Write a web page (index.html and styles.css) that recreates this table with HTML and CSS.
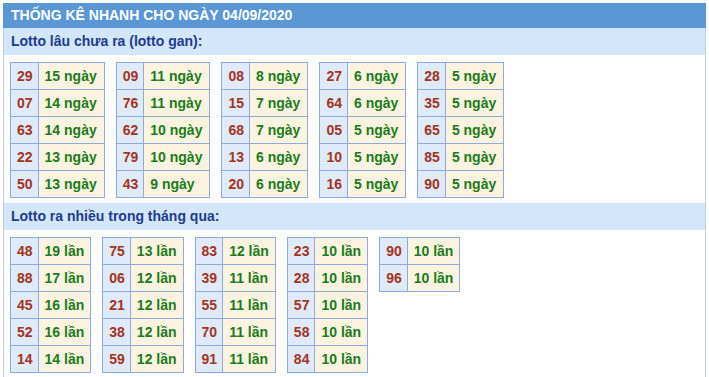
FILE: index.html
```html
<!DOCTYPE html>
<html>
<head>
<meta charset="utf-8">
<link rel="stylesheet" href="styles.css">
</head>
<body>
<div class="wrap">
  <div class="title">THỐNG KÊ NHANH CHO NGÀY 04/09/2020</div>
  <div class="content">
    <div class="sub">Lotto lâu chưa ra (lotto gan):</div>
    <div class="tables gan">
      <table class="t"><tr><td class="n">29</td><td class="v">15 ngày</td></tr><tr><td class="n">07</td><td class="v">14 ngày</td></tr><tr><td class="n">63</td><td class="v">14 ngày</td></tr><tr><td class="n">22</td><td class="v">13 ngày</td></tr><tr><td class="n">50</td><td class="v">13 ngày</td></tr></table>
      <table class="t"><tr><td class="n">09</td><td class="v">11 ngày</td></tr><tr><td class="n">76</td><td class="v">11 ngày</td></tr><tr><td class="n">62</td><td class="v">10 ngày</td></tr><tr><td class="n">79</td><td class="v">10 ngày</td></tr><tr><td class="n">43</td><td class="v">9 ngày</td></tr></table>
      <table class="t"><tr><td class="n">08</td><td class="v">8 ngày</td></tr><tr><td class="n">15</td><td class="v">7 ngày</td></tr><tr><td class="n">68</td><td class="v">7 ngày</td></tr><tr><td class="n">13</td><td class="v">6 ngày</td></tr><tr><td class="n">20</td><td class="v">6 ngày</td></tr></table>
      <table class="t"><tr><td class="n">27</td><td class="v">6 ngày</td></tr><tr><td class="n">64</td><td class="v">6 ngày</td></tr><tr><td class="n">05</td><td class="v">5 ngày</td></tr><tr><td class="n">10</td><td class="v">5 ngày</td></tr><tr><td class="n">16</td><td class="v">5 ngày</td></tr></table>
      <table class="t"><tr><td class="n">28</td><td class="v">5 ngày</td></tr><tr><td class="n">35</td><td class="v">5 ngày</td></tr><tr><td class="n">65</td><td class="v">5 ngày</td></tr><tr><td class="n">85</td><td class="v">5 ngày</td></tr><tr><td class="n">90</td><td class="v">5 ngày</td></tr></table>
    </div>
    <div class="sub">Lotto ra nhiều trong tháng qua:</div>
    <div class="tables lan">
      <table class="t"><tr><td class="n">48</td><td class="v">19 lần</td></tr><tr><td class="n">88</td><td class="v">17 lần</td></tr><tr><td class="n">45</td><td class="v">16 lần</td></tr><tr><td class="n">52</td><td class="v">16 lần</td></tr><tr><td class="n">14</td><td class="v">14 lần</td></tr></table>
      <table class="t"><tr><td class="n">75</td><td class="v">13 lần</td></tr><tr><td class="n">06</td><td class="v">12 lần</td></tr><tr><td class="n">21</td><td class="v">12 lần</td></tr><tr><td class="n">38</td><td class="v">12 lần</td></tr><tr><td class="n">59</td><td class="v">12 lần</td></tr></table>
      <table class="t"><tr><td class="n">83</td><td class="v">12 lần</td></tr><tr><td class="n">39</td><td class="v">11 lần</td></tr><tr><td class="n">55</td><td class="v">11 lần</td></tr><tr><td class="n">70</td><td class="v">11 lần</td></tr><tr><td class="n">91</td><td class="v">11 lần</td></tr></table>
      <table class="t"><tr><td class="n">23</td><td class="v">10 lần</td></tr><tr><td class="n">28</td><td class="v">10 lần</td></tr><tr><td class="n">57</td><td class="v">10 lần</td></tr><tr><td class="n">58</td><td class="v">10 lần</td></tr><tr><td class="n">84</td><td class="v">10 lần</td></tr></table>
      <table class="t"><tr><td class="n">90</td><td class="v">10 lần</td></tr><tr><td class="n">96</td><td class="v">10 lần</td></tr></table>
    </div>
  </div>
</div>
</body>
</html>
```
FILE: styles.css
```css
html, body {
  margin: 0;
  padding: 0;
  background: #ffffff;
}
body {
  font-family: "Liberation Sans", Arial, sans-serif;
  font-size: 14px;
}
.wrap {
  margin: 3px 3px 0 3px;
  width: 703px;
}
.title {
  height: 25px;
  line-height: 25px;
  background: #5b96d5;
  color: #ffffff;
  font-weight: bold;
  font-size: 14px;
  padding-left: 8px;
}
.content {
  border-left: 1px solid #c8cdd6;
  border-right: 1px solid #c8cdd6;
  padding-bottom: 20px;
}
.sub {
  height: 27px;
  line-height: 27px;
  background: #d4e6fa;
  color: #1d3b8f;
  font-weight: bold;
  font-size: 14px;
  padding-left: 7px;
}
.tables {
  display: flex;
  align-items: flex-start;
  gap: 11px;
  padding: 7px 6px 5px 6px;
}
.t {
  border-collapse: collapse;
}
.t td {
  border: 1px solid #8eaadf;
  height: 26px;
  font-weight: bold;
  font-size: 14px;
  white-space: nowrap;
}
.t td.n {
  background: #dfeafb;
  color: #a3341c;
  text-align: center;
  padding: 0 5px 0 6px;
}
.t td.v {
  background: #fdf3e1;
  color: #1b7c1b;
  padding: 0 7px 0 6px;
}
.lan .t td.v {
  padding: 0 6px;
}
```
